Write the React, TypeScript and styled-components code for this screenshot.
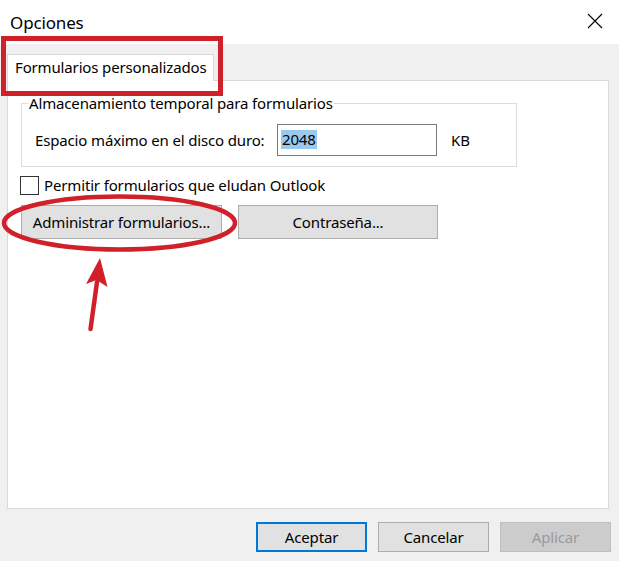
import React from 'react';
import styled, { createGlobalStyle } from "styled-components";

const GlobalStyle = createGlobalStyle`
  body {
    margin: 0;
    font-family: "Noto Sans", "Liberation Sans", sans-serif;
    letter-spacing: -0.15px;
    color: #000;
  }
`

export default function App() {
    return (
        <Window>
            <GlobalStyle/>
            <TitleBar>
                <Title>Opciones</Title>
                <CloseIcon width="16" height="16" viewBox="0 0 16 16">
                    <path d="M1 1 L15 15 M15 1 L1 15" stroke="#000" strokeWidth="1.1" fill="none"/>
                </CloseIcon>
            </TitleBar>
            <Body>
                <Tabs>
                    <Tab>Formularios personalizados</Tab>
                </Tabs>
                <Panel>
                    <Group>
                        <Legend>Almacenamiento temporal para formularios</Legend>
                        <FieldRow>
                            <Label>Espacio máximo en el disco duro:</Label>
                            <TextBox><Selected>2048</Selected></TextBox>
                            <Unit>KB</Unit>
                        </FieldRow>
                    </Group>
                    <CheckRow>
                        <CheckBox/>
                        <span>Permitir formularios que eludan Outlook</span>
                    </CheckRow>
                    <ButtonRow>
                        <Button $width={201}>Administrar formularios...</Button>
                        <Button $width={200}>Contraseña...</Button>
                    </ButtonRow>
                </Panel>
            </Body>
            <Footer>
                <DialogButton $variant="default">Aceptar</DialogButton>
                <DialogButton>Cancelar</DialogButton>
                <DialogButton $variant="disabled">Aplicar</DialogButton>
            </Footer>

            <Highlight/>
            <Marks width="619" height="561" viewBox="0 0 619 561">
                <ellipse cx="119.5" cy="223" rx="115.5" ry="26.5" fill="none" stroke="#d0202a" strokeWidth="4.5"/>
                <path d="M97 282 L90.5 329" stroke="#d0202a" strokeWidth="4.5" strokeLinecap="round" fill="none"/>
                <path d="M100 258 L86 284 L96.5 280 L107.5 287 Z" fill="#d0202a"/>
            </Marks>
        </Window>
    );
}

const Window = styled.div`
  position: relative;
  width: 619px;
  height: 561px;
  background: #f0f0f0;
  display: flex;
  flex-direction: column;
  overflow: hidden;
`

const TitleBar = styled.div`
  height: 44px;
  flex-shrink: 0;
  background: #fff;
  display: flex;
  align-items: flex-start;
  justify-content: space-between;
  padding: 12px 16px 0 10px;
  box-sizing: border-box;
`

const Title = styled.div`
  font-size: 17px;
  line-height: 22px;
`

const CloseIcon = styled.svg`
  margin-top: 1px;
`

const Body = styled.div`
  flex: 1;
  display: flex;
  flex-direction: column;
  padding: 10px 10px 0 7px;
`

const Tabs = styled.div`
  display: flex;
`

const Tab = styled.div`
  position: relative;
  z-index: 1;
  width: 207px;
  height: 27px;
  box-sizing: border-box;
  margin-bottom: -1px;
  padding-left: 7px;
  background: #fff;
  border: 1px solid #d9d9d9;
  border-bottom: none;
  font-size: 15px;
  line-height: 24px;
  white-space: nowrap;
`

const Panel = styled.div`
  flex: 1;
  background: #fff;
  border: 1px solid #d9d9d9;
  padding: 13px 0 0 13px;
  font-size: 15px;
`

const Group = styled.fieldset`
  width: 496px;
  box-sizing: border-box;
  margin: 0;
  padding: 0 0 10px 13px;
  border: 1px solid #dcdcdc;
`

const Legend = styled.legend`
  margin-left: -7px;
  padding: 0 1px;
  line-height: 18px;
`

const FieldRow = styled.div`
  display: grid;
  grid-template-columns: 242px 160px auto;
  align-items: center;
  margin-top: 12px;
`

const Label = styled.span`
  line-height: 20px;
  white-space: nowrap;
`

const TextBox = styled.div`
  height: 32px;
  box-sizing: border-box;
  border: 1px solid #7a7a7a;
  padding: 4px 0 0 3px;
`

const Selected = styled.span`
  display: inline-block;
  background: #99c9ef;
  line-height: 19px;
  padding: 0 1px;
`

const Unit = styled.span`
  margin-left: 14px;
`

const CheckRow = styled.label`
  display: flex;
  align-items: center;
  gap: 5px;
  margin: 8px 0 0 -1px;
  line-height: 20px;
`

const CheckBox = styled.span`
  width: 19px;
  height: 19px;
  box-sizing: border-box;
  border: 1px solid #333;
  background: #fff;
`

const ButtonRow = styled.div`
  display: flex;
  gap: 16px;
  margin-top: 10px;
`

const Button = styled.button<{ $width: number }>`
  width: ${p => p.$width}px;
  height: 34px;
  background: #e1e1e1;
  border: 1px solid #adadad;
  font-family: inherit;
  font-size: 15px;
  letter-spacing: inherit;
  color: #000;
  padding: 0;
`

const Footer = styled.div`
  height: 52px;
  flex-shrink: 0;
  display: flex;
  justify-content: flex-end;
  align-items: flex-start;
  gap: 11px;
  padding: 13px 8px 0 0;
  box-sizing: border-box;
`

const DialogButton = styled.button<{ $variant?: "default" | "disabled" }>`
  width: 111px;
  height: 30px;
  padding: 0;
  font-family: inherit;
  font-size: 15px;
  letter-spacing: inherit;
  background: ${p => p.$variant === "disabled" ? "#cccccc" : "#e1e1e1"};
  color: ${p => p.$variant === "disabled" ? "#9a9a9a" : "#000"};
  border: ${p => p.$variant === "default" ? "2px solid #0078d7" : p.$variant === "disabled" ? "1px solid #bfbfbf" : "1px solid #adadad"};
`

const Highlight = styled.div`
  position: absolute;
  left: 1px;
  top: 36px;
  width: 222px;
  height: 60px;
  box-sizing: border-box;
  border: 5px solid #d0202a;
  pointer-events: none;
`

const Marks = styled.svg`
  position: absolute;
  left: 0;
  top: 0;
  pointer-events: none;
`
